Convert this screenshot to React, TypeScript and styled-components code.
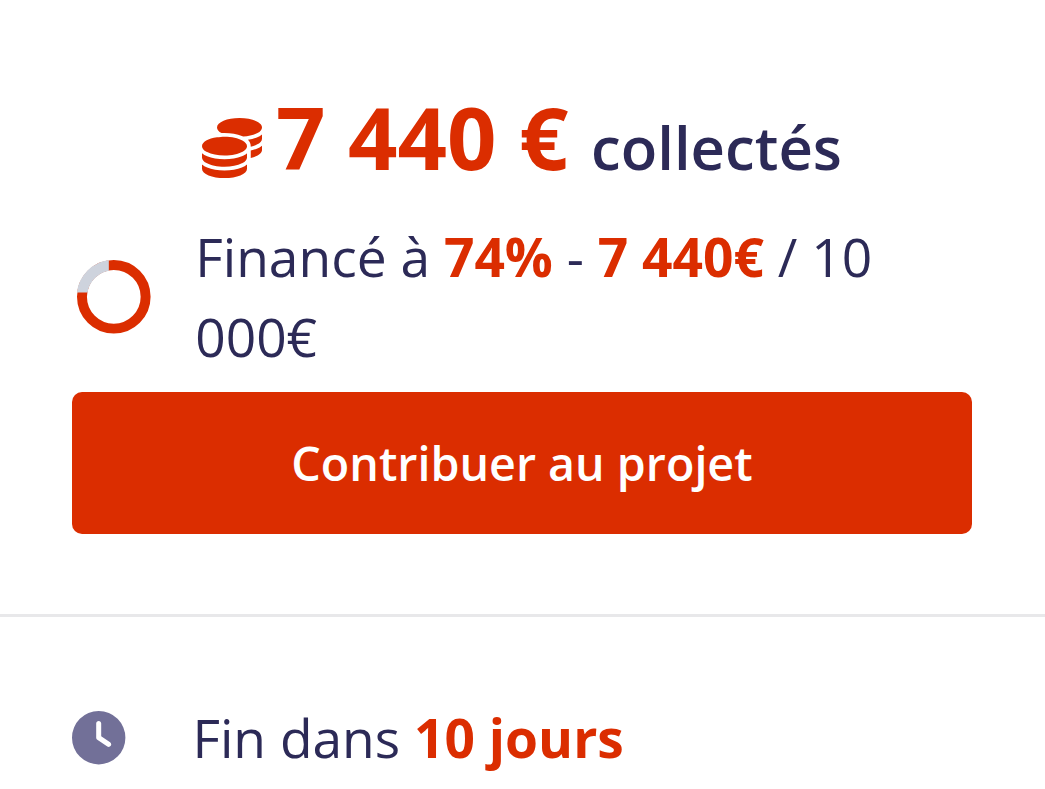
import styled, { createGlobalStyle } from "styled-components";
import { FaCoins, FaClock } from "react-icons/fa6";

const App = () => {
  return (
    <Page>
      <GlobalStyle />
      <FundingSection>
        <Collected>
          <CoinsIcon />
          <Amount>7 440 €</Amount>
          <CollectedLabel>collectés</CollectedLabel>
        </Collected>
        <Progress>
          <Ring viewBox="0 0 74 74">
            <clipPath id="remaining">
              <rect width="32" height="32.6" />
            </clipPath>
            <circle cx="37" cy="37" r="32" stroke="#db2d00" />
            <circle
              cx="37"
              cy="37"
              r="32"
              stroke="#ced3dd"
              strokeWidth="10.6"
              clipPath="url(#remaining)"
            />
          </Ring>
          <ProgressText>
            Financé à <Strong>74%</Strong> - <Strong>7 440€</Strong> / 10 000€
          </ProgressText>
        </Progress>
        <ContributeButton>Contribuer au projet</ContributeButton>
      </FundingSection>
      <DeadlineSection>
        <ClockIcon />
        <DeadlineText>
          Fin dans <Strong>10 jours</Strong>
        </DeadlineText>
      </DeadlineSection>
    </Page>
  );
};

const GlobalStyle = createGlobalStyle`
  body {
    margin: 0;
    background: #ffffff;
    color: #2c2a57;
    font-family: "Open Sans", sans-serif;
  }
`;

const Page = styled.main`
  width: 1045px;
  height: 789px;
  overflow: hidden;
`;

const FundingSection = styled.section`
  box-sizing: border-box;
  height: 617px;
  padding: 76px 73px 0 72px;
  border-bottom: 3px solid #e8e8ea;
`;

const Collected = styled.div`
  display: flex;
  align-items: baseline;
  height: 141px;
  padding-left: 130px;
  line-height: 120px;
  white-space: nowrap;
`;

const CoinsIcon = styled(FaCoins)`
  width: 60px;
  height: 60px;
  margin-right: 14px;
  color: #db2d00;
  align-self: flex-start;
  margin-top: 42px;
`;

const Amount = styled.span`
  margin-right: 22.5px;
  color: #db2d00;
  font-size: 86.6px;
  font-weight: 700;
`;

const CollectedLabel = styled.span`
  font-size: 59.8px;
  font-weight: 600;
`;

const Progress = styled.div`
  display: flex;
  align-items: center;
  height: 160px;
  margin-bottom: 15px;
`;

const Ring = styled.svg`
  flex: none;
  width: 73.6px;
  height: 73.6px;
  margin: 0 44.6px 1px 5px;
  overflow: visible;
  fill: none;
  stroke-width: 10;
`;

const ProgressText = styled.p`
  width: 720px;
  margin: 0;
  font-size: 53.3px;
  line-height: 80px;
`;

const Strong = styled.strong`
  color: #db2d00;
  font-weight: 700;
`;

const ContributeButton = styled.button`
  display: block;
  width: 900px;
  height: 142px;
  padding: 0;
  border: 0;
  border-radius: 10px;
  background: #db2d00;
  color: #ffffff;
  font-family: inherit;
  font-size: 46.6px;
  font-weight: 600;
`;

const DeadlineSection = styled.section`
  display: flex;
  align-items: center;
  padding: 81px 72px 0;
`;

const ClockIcon = styled(FaClock)`
  width: 53.4px;
  height: 53.4px;
  margin: 0 67px 1px 0;
  overflow: visible;
  color: #727098;
`;

const DeadlineText = styled.p`
  margin: 0;
  font-size: 53.3px;
  line-height: 80px;
`;

export default App;
